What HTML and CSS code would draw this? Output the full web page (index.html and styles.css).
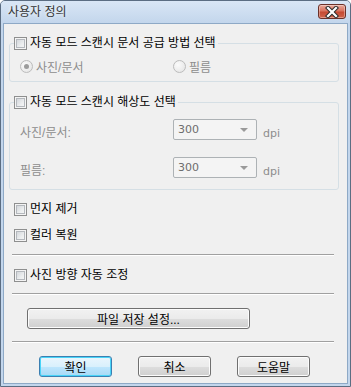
FILE: index.html
```html
<!DOCTYPE html>
<html lang="ko">
<head>
  <meta charset="UTF-8" />
  <title>사용자 정의</title>
  <link rel="stylesheet" href="styles.css">
</head>
<body>
  <div class="window">
    <!-- Title Bar -->
    <div class="titlebar">
      <span class="title">사용자 정의</span>
      <button class="close" aria-label="닫기">
        <svg width="26" height="12" viewBox="0 0 26 12">
          <path d="M9 2 L17 10 M17 2 L9 10" stroke="#2b2b2b" stroke-width="4.2" stroke-linecap="square" fill="none"/>
          <path d="M9 2 L17 10 M17 2 L9 10" stroke="#fff" stroke-width="2.2" stroke-linecap="square" fill="none"/>
        </svg>
      </button>
    </div>

    <!-- Client Area -->
    <div class="client">
      <fieldset class="group group-feed">
        <legend><label class="check"><span class="box"></span>자동 모드 스캔시 문서 공급 방법 선택</label></legend>
        <div class="radios">
          <label class="radio disabled"><span class="dot checked"></span>사진/문서</label>
          <label class="radio disabled"><span class="dot"></span>필름</label>
        </div>
      </fieldset>

      <fieldset class="group group-res">
        <legend><label class="check"><span class="box"></span>자동 모드 스캔시 해상도 선택</label></legend>
        <div class="res-row">
          <span class="res-label">사진/문서:</span>
          <span class="combo"><span>300</span><span class="arrow"></span></span>
          <span class="unit">dpi</span>
        </div>
        <div class="res-row">
          <span class="res-label">필름:</span>
          <span class="combo"><span>300</span><span class="arrow"></span></span>
          <span class="unit">dpi</span>
        </div>
      </fieldset>

      <label class="check row dust"><span class="box"></span>먼지 제거</label>
      <label class="check row color"><span class="box"></span>컬러 복원</label>
      <div class="sep"></div>
      <label class="check row orient"><span class="box"></span>사진 방향 자동 조정</label>
      <div class="sep"></div>
      <button class="btn file-btn">파일 저장 설정...</button>
      <div class="sep sep-bottom"></div>

      <div class="actions">
        <button class="btn default">확인</button>
        <button class="btn">취소</button>
        <button class="btn">도움말</button>
      </div>
    </div>
  </div>
</body>
</html>
```

FILE: styles.css
```css
/* Global Reset */
* {
  margin: 0;
  padding: 0;
  box-sizing: border-box;
}
body {
  font-family: "Liberation Sans", "Noto Sans CJK KR", sans-serif;
  font-size: 12px;
  color: #000;
  background: #fff;
}
/* Window Frame */
.window {
  width: 351px;
  height: 387px;
  border: 1px solid #5b6d82;
  border-radius: 5px 5px 0 0;
  background: #c3d6ec;
  padding: 0 2px 2px;
  display: flex;
  flex-direction: column;
}
.titlebar {
  height: 22px;
  display: flex;
  justify-content: space-between;
  align-items: flex-start;
  margin: 0 -2px;
  padding: 0 4px 0 7px;
  background: linear-gradient(#d9e6f5, #c3d6ec);
  border-radius: 4px 4px 0 0;
}
.title {
  line-height: 22px;
  color: #333;
  text-shadow: 0 0 4px #fff;
}
.close {
  width: 28px;
  height: 15px;
  margin-top: 3px;
  border: 1px solid #6b3129;
  border-radius: 3px;
  background: linear-gradient(#e9a99b 0%, #d9735f 45%, #c54a33 55%, #d0644c 100%);
  box-shadow: inset 0 0 0 1px rgba(255,255,255,0.35);
  display: flex;
  align-items: center;
  justify-content: center;
}
.client {
  flex: 1;
  background: #f0f0f0;
  border: 1px solid #8ea9c6;
  padding: 0 8px 0 5px;
  display: flex;
  flex-direction: column;
}
/* Group boxes */
.group {
  border: 1px solid #d5dfe5;
  border-radius: 3px;
  min-inline-size: 0;
  padding: 8px 6px 7px 4px;
}
.group-feed {
  margin-top: 12px;
}
.group-res {
  margin-top: 13px;
  padding-top: 9px;
  padding-bottom: 10px;
}
.group legend {
  padding: 0 2px 0 0;
}
/* Checkboxes */
.check {
  display: flex;
  align-items: center;
  height: 15px;
  line-height: 15px;
  white-space: nowrap;
}
.box {
  width: 13px;
  height: 13px;
  margin-right: 3px;
  border: 1px solid #8e8f8f;
  background: linear-gradient(135deg, #c9cdd3, #eceeef 60%, #fafafa);
  box-shadow: inset 0 0 0 1px #f4f4f4, inset 0 0 0 2px #b4b8bd;
  flex-shrink: 0;
}
.row {
  margin-left: 5px;
}
.dust { margin-top: 12px; }
.color { margin-top: 11px; }
.orient { margin-top: 12px; }
/* Radios */
.radios {
  display: flex;
  padding-left: 6px;
}
.radio {
  display: flex;
  align-items: center;
  height: 15px;
  width: 153px;
}
.disabled {
  color: #8d8d8d;
}
.dot {
  width: 13px;
  height: 13px;
  margin-right: 3px;
  border: 1px solid #bcbcbc;
  border-radius: 50%;
  background: radial-gradient(circle at 35% 35%, #fbfbfb, #e2e2e2);
  display: flex;
  align-items: center;
  justify-content: center;
}
.dot.checked::after {
  content: "";
  width: 5px;
  height: 5px;
  border-radius: 50%;
  background: #9c9c9c;
}
/* Resolution rows */
.res-row {
  display: flex;
  align-items: flex-start;
  padding-left: 6px;
}
.res-row + .res-row {
  margin-top: 16px;
}
.res-label {
  width: 153px;
  margin-top: 7px;
  line-height: 15px;
  color: #8d8d8d;
}
.combo {
  width: 84px;
  height: 21px;
  border: 1px solid #adb2b5;
  border-radius: 2px;
  background: #f4f4f4;
  color: #6d6d6d;
  display: flex;
  align-items: center;
  justify-content: space-between;
  padding: 0 8px 0 4px;
  font-family: "DejaVu Sans", sans-serif;
  font-size: 11px;
}
.arrow {
  width: 0;
  height: 0;
  border-left: 4px solid transparent;
  border-right: 4px solid transparent;
  border-top: 4px solid #9a9a9a;
}
.unit {
  margin: 7px 0 0 6px;
  line-height: 15px;
  color: #8d8d8d;
  font-family: "DejaVu Sans", sans-serif;
  font-size: 11px;
}
/* Separators */
.sep {
  height: 1px;
  margin: 11px 5px 0 3px;
  background: #a0a0a0;
  border-bottom: 1px solid #fff;
  height: 2px;
}
.orient + .sep {
  margin-top: 10px;
}
/* Buttons */
.btn {
  height: 21px;
  border: 1px solid #707070;
  border-radius: 3px;
  background: linear-gradient(#f2f2f2 0%, #ebebeb 50%, #dddddd 51%, #cfcfcf 100%);
  box-shadow: inset 0 0 0 1px #fcfcfc;
  font-family: "Liberation Sans", "Noto Sans CJK KR", sans-serif;
  font-size: 12px;
  color: #000;
}
.file-btn {
  width: 223px;
  margin: 13px 0 0 18px;
}
.sep-bottom {
  margin-top: 12px;
}
.actions {
  display: flex;
  gap: 26px;
  margin: 13px 0 0 30px;
}
.actions .btn {
  width: 73px;
}
.btn.default {
  border-color: #3c7fb1;
  background: linear-gradient(#eaf6fd 0%, #d9f0fc 50%, #bee6fd 51%, #a7d9f5 100%);
  box-shadow: inset 0 0 0 1px #48d4f8;
}
```
